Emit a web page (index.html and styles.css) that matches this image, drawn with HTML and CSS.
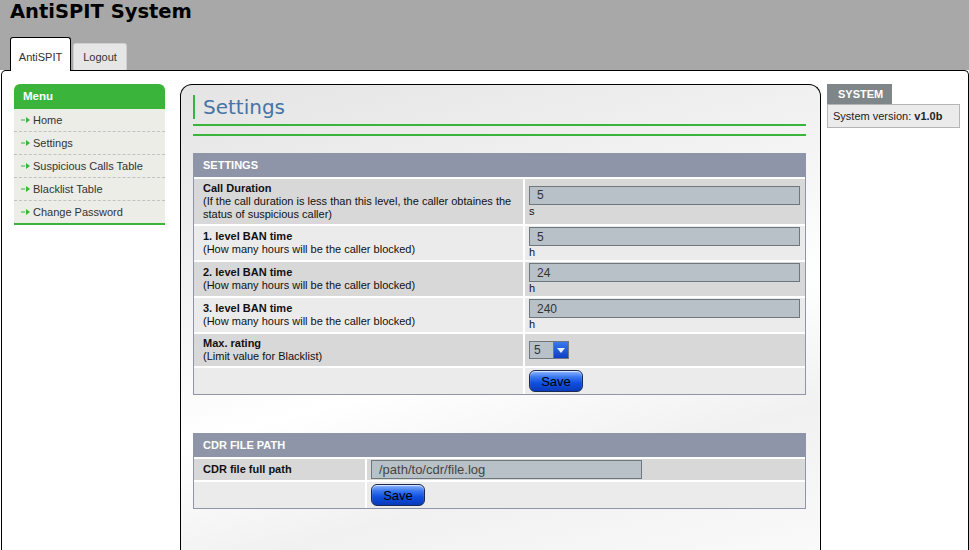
FILE: index.html
```html
<!DOCTYPE html>
<html lang="en">
<head>
    <meta charset="UTF-8">
    <title>AntiSPIT System - Settings</title>
    <link rel="stylesheet" href="styles.css">
</head>
<body>

    <div class="top">
        <h1>AntiSPIT System</h1>
        <div class="tabs">
            <a class="tab active" href="#">AntiSPIT</a>
            <a class="tab" href="#">Logout</a>
        </div>
    </div>

    <div class="page">

        <!-- left menu -->
        <div class="sidebar">
            <div class="menuHead">Menu</div>
            <ul class="menu">
                <li><span class="arrow"><svg width="9" height="6" viewBox="0 0 9 6"><path d="M0 3h4" stroke="#3bb43c" stroke-width="1"/><path d="M5 0l4 3-4 3z" fill="#3bb43c"/></svg></span>Home</li>
                <li><span class="arrow"><svg width="9" height="6" viewBox="0 0 9 6"><path d="M0 3h4" stroke="#3bb43c" stroke-width="1"/><path d="M5 0l4 3-4 3z" fill="#3bb43c"/></svg></span>Settings</li>
                <li><span class="arrow"><svg width="9" height="6" viewBox="0 0 9 6"><path d="M0 3h4" stroke="#3bb43c" stroke-width="1"/><path d="M5 0l4 3-4 3z" fill="#3bb43c"/></svg></span>Suspicious Calls Table</li>
                <li><span class="arrow"><svg width="9" height="6" viewBox="0 0 9 6"><path d="M0 3h4" stroke="#3bb43c" stroke-width="1"/><path d="M5 0l4 3-4 3z" fill="#3bb43c"/></svg></span>Blacklist Table</li>
                <li><span class="arrow"><svg width="9" height="6" viewBox="0 0 9 6"><path d="M0 3h4" stroke="#3bb43c" stroke-width="1"/><path d="M5 0l4 3-4 3z" fill="#3bb43c"/></svg></span>Change Password</li>
            </ul>
        </div>

        <!-- main panel -->
        <div class="main">
            <div class="title">Settings</div>
            <div class="rule"></div>
            <div class="rule second"></div>

            <table class="form settings">
                <tr><th colspan="2">SETTINGS</th></tr>
                <tr class="dark">
                    <td class="label"><b>Call Duration</b><br>(If the call duration is less than this level, the caller obtaines the status of suspicious caller)</td>
                    <td class="val"><input class="field" type="text" value="5"><br>s</td>
                </tr>
                <tr class="light">
                    <td class="label"><b>1. level BAN time</b><br>(How many hours will be the caller blocked)</td>
                    <td class="val"><input class="field" type="text" value="5"><br>h</td>
                </tr>
                <tr class="dark">
                    <td class="label"><b>2. level BAN time</b><br>(How many hours will be the caller blocked)</td>
                    <td class="val"><input class="field" type="text" value="24"><br>h</td>
                </tr>
                <tr class="light">
                    <td class="label"><b>3. level BAN time</b><br>(How many hours will be the caller blocked)</td>
                    <td class="val"><input class="field" type="text" value="240"><br>h</td>
                </tr>
                <tr class="dark">
                    <td class="label"><b>Max. rating</b><br>(Limit value for Blacklist)</td>
                    <td class="val">
                        <span class="select">
                            <select>
                                <option>5</option>
                            </select>
                            <span class="drop"><svg width="8" height="5" viewBox="0 0 8 5"><path d="M0 0h8l-4 5z" fill="#e8eefc"/></svg></span>
                        </span>
                    </td>
                </tr>
                <tr class="light">
                    <td class="label"></td>
                    <td class="val btnCell"><button>Save</button></td>
                </tr>
            </table>

            <table class="form cdr">
                <tr><th colspan="2">CDR FILE PATH</th></tr>
                <tr class="dark">
                    <td class="label"><b>CDR file full path</b></td>
                    <td class="val"><input class="field path" type="text" value="/path/to/cdr/file.log"></td>
                </tr>
                <tr class="light">
                    <td class="label"></td>
                    <td class="val btnCell"><button>Save</button></td>
                </tr>
            </table>
        </div>

        <!-- right box -->
        <div class="system">
            <div class="systemHead">SYSTEM</div>
            <div class="systemBody">System version: <b>v1.0b</b></div>
        </div>

    </div>

</body>
</html>
```

FILE: styles.css
```css
body {
    margin: 0;
    background-color: white;
    font-family: "Liberation Sans", Arial, sans-serif;
    font-size: 11px;
    color: #111;
}
.top {
    background-color: #a8a8a8;
    height: 70px;
    display: flex;
    flex-direction: column;
    justify-content: space-between;
}
h1 {
    margin: 0;
    padding: 0 0 0 10px;
    font-family: "DejaVu Sans", Verdana, sans-serif;
    font-size: 19.5px;
    line-height: 23px;
    color: #000;
}
.tabs {
    display: flex;
    align-items: flex-end;
    padding-left: 10px;
    gap: 2px;
}
.tab {
    display: block;
    text-decoration: none;
    color: #333;
    background-color: #e6e6e6;
    border: 1px solid #cfcfcf;
    border-bottom: none;
    border-radius: 3px 3px 0 0;
    width: 52px;
    height: 26px;
    line-height: 27px;
    text-align: center;
}
.tab.active {
    background-color: white;
    border-color: black;
    width: 59px;
    height: 33px;
    line-height: 38px;
    margin-bottom: -1px;
    position: relative;
    z-index: 2;
}
.page {
    margin-left: 1px;
    border: 1px solid black;
    border-bottom: none;
    border-radius: 5px 5px 0 0;
    display: flex;
    align-items: flex-start;
    padding-top: 13px;
    min-height: 480px;
}
.sidebar {
    width: 151px;
    margin-left: 12px;
}
.menuHead {
    background-color: #3bb43c;
    color: white;
    font-weight: bold;
    font-size: 11.5px;
    height: 25px;
    line-height: 25px;
    padding-left: 9px;
    border-radius: 6px 6px 0 0;
}
.menu {
    list-style: none;
    margin: 0;
    padding: 0;
    background-color: #ebede6;
    border-bottom: 2px solid #3bb43c;
}
.menu li {
    height: 22px;
    line-height: 22px;
    padding-left: 7px;
    color: #333;
    border-bottom: 1px dashed #c2c2c2;
    display: flex;
    align-items: center;
}
.menu li:last-child {
    border-bottom: none;
}
.arrow {
    display: flex;
    margin-right: 3px;
}
.main {
    width: 641px;
    margin-left: 15px;
    border: 1px solid black;
    border-bottom: none;
    border-radius: 12px 12px 0 0;
    padding: 0 14px 60px 12px;
    box-sizing: border-box;
    background: linear-gradient(165deg, #e4e4e4 0%, #f4f4f4 35%, #ffffff 55%, #f1f1f1 75%, #fbfbfb 100%);
}
.title {
    margin-top: 10px;
    height: 24px;
    border-left: 2px solid #3bb43c;
    padding-left: 8px;
    font-family: "DejaVu Sans", Verdana, sans-serif;
    font-size: 20px;
    line-height: 24px;
    color: #4574a6;
}
.rule {
    height: 2px;
    background-color: #3bb43c;
    margin-top: 5px;
}
.rule.second {
    margin-top: 8px;
}
.form {
    width: 100%;
    border-collapse: separate;
    border-spacing: 0;
    border: 1px solid #8f95a8;
    border-top: none;
}
.settings {
    margin-top: 17px;
}
.cdr {
    margin-top: 38px;
}
.form th {
    background-color: #8f95a8;
    color: white;
    text-align: left;
    height: 24px;
    padding: 0 0 0 9px;
    font-weight: bold;
}
.form td {
    border-top: 2px solid white;
    vertical-align: middle;
    line-height: 13px;
}
.form td.label {
    padding: 3px 9px;
}
.settings td.label {
    width: 311px;
}
.cdr td.label {
    width: 153px;
}
.form td.val {
    border-left: 2px solid white;
    padding: 1px 4px;
}
.dark td {
    background-color: #d8d8d8;
}
.light td {
    background-color: #ebebeb;
}
.field {
    width: 271px;
    height: 19px;
    box-sizing: border-box;
    margin: 0;
    border: 1px solid #6e777d;
    background-color: #b9c1c8;
    padding: 0 0 0 7px;
    font-family: "Liberation Sans", Arial, sans-serif;
    font-size: 12px;
    color: #333;
}
.field.path {
    font-size: 13px;
    color: #444;
}
.select {
    display: inline-flex;
    border: 1px solid #6e777d;
    height: 18px;
    box-sizing: border-box;
    vertical-align: middle;
    margin: 3px 0;
}
.select select {
    appearance: none;
    -webkit-appearance: none;
    border: none;
    margin: 0;
    width: 23px;
    height: 16px;
    padding: 0 0 0 4px;
    background-color: #b9c1c8;
    font-family: "Liberation Sans", Arial, sans-serif;
    font-size: 12px;
    color: #333;
}
.drop {
    width: 14px;
    height: 16px;
    background: linear-gradient(#3a78f0, #0d3fc4);
    border-left: 1px solid #6e777d;
    display: flex;
    align-items: center;
    justify-content: center;
}
.btnCell {
    height: 24px;
}
button {
    width: 54px;
    height: 22px;
    margin: 0;
    padding: 0;
    border: 1px solid #1a2a55;
    border-radius: 6px;
    background: linear-gradient(#8fb5ff 0%, #3a78f0 30%, #0f4fe0 60%, #0a3ab8 100%);
    box-shadow: inset 0 1px 1px rgba(255, 255, 255, 0.7);
    font-family: "Liberation Sans", Arial, sans-serif;
    font-size: 13px;
    color: black;
}
.system {
    margin-left: 6px;
    width: 133px;
}
.systemHead {
    display: inline-block;
    background-color: #7e8689;
    color: white;
    font-weight: bold;
    width: 65px;
    height: 20px;
    line-height: 21px;
    padding-left: 11px;
    box-sizing: border-box;
}
.systemBody {
    background-color: #ebebeb;
    border: 1px solid #b5b5b5;
    height: 24px;
    line-height: 22px;
    padding-left: 5px;
    box-sizing: border-box;
    color: #222;
}
```
